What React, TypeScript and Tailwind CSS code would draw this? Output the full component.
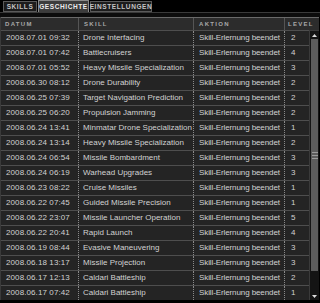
const rows: [string, string, number][] = [
  ["2008.07.01 09:32", "Drone Interfacing", 2],
  ["2008.07.01 07:42", "Battlecruisers", 4],
  ["2008.07.01 05:52", "Heavy Missile Specialization", 3],
  ["2008.06.30 08:12", "Drone Durability", 2],
  ["2008.06.25 07:39", "Target Navigation Prediction", 2],
  ["2008.06.25 06:20", "Propulsion Jamming", 2],
  ["2008.06.24 13:41", "Minmatar Drone Specialization", 1],
  ["2008.06.24 13:14", "Heavy Missile Specialization", 2],
  ["2008.06.24 06:54", "Missile Bombardment", 3],
  ["2008.06.24 06:19", "Warhead Upgrades", 3],
  ["2008.06.23 08:22", "Cruise Missiles", 1],
  ["2008.06.22 07:45", "Guided Missile Precision", 1],
  ["2008.06.22 23:07", "Missile Launcher Operation", 5],
  ["2008.06.22 20:41", "Rapid Launch", 4],
  ["2008.06.19 08:44", "Evasive Maneuvering", 3],
  ["2008.06.18 13:17", "Missile Projection", 3],
  ["2008.06.17 12:13", "Caldari Battleship", 2],
  ["2008.06.17 07:42", "Caldari Battleship", 1],
];

const cols = "grid grid-cols-[77px_115px_91px_25px]";

const App = () => {
  return (
    <div className="w-[320px] h-[303px] bg-black overflow-hidden font-['Liberation_Sans',sans-serif] text-[#d2d2d2]">
      {/* tabs */}
      <div className="flex items-end h-[12px] pl-[3px] gap-[1px] text-[6.5px] font-bold tracking-[0.6px] uppercase">
        <div className="h-[11px] w-[34px] shrink-0 flex items-center justify-center border border-[#5a5a5a] bg-[#1c1c1c] text-[#c4c4c4]">
          Skills
        </div>
        <div className="h-[12px] w-[51px] shrink-0 flex items-center justify-center border border-b-0 border-[#8a8a8a] bg-[#3c3c3c] text-[#ececec]">
          Geschichte
        </div>
        <div className="h-[11px] w-[62px] shrink-0 flex items-center justify-center border border-[#5a5a5a] bg-[#1c1c1c] text-[#c4c4c4]">
          Einstellungen
        </div>
      </div>
      <div className="h-[5px] bg-[#0c0c0c] border-t border-[#3a3a3a]" />

      <div className="border-l border-[#3a3a3a] w-[319px]">
        {/* header */}
        <div className="flex h-[13px] bg-[#2c2c2c] border-t border-[#6a6a6a] text-[6px] font-bold tracking-[1.3px] text-[#a8a8a8]">
          <div className={cols}>
            <div className="pl-[4px] flex items-center">DATUM</div>
            <div className="pl-[5px] flex items-center border-l border-[#555]">SKILL</div>
            <div className="pl-[5px] flex items-center border-l border-[#555]">AKTION</div>
            <div className="pl-[3px] flex items-center border-l border-[#555]">LEVEL</div>
          </div>
        </div>
        <div className="flex">
          <div className="w-[308px]">
            {rows.map(([d, s, l], i) => (
              <div
                key={i}
                className={`${cols} h-[15px] bg-[#242424] border-t border-[#4e4e4e] text-[8px] leading-none`}
              >
                <div className="pl-[5px] flex items-center tracking-[0.1px] whitespace-nowrap">{d}</div>
                <div className="pl-[4px] flex items-center border-l border-dotted border-[#8a8a8a] whitespace-nowrap overflow-hidden">{s}</div>
                <div className="pl-[5px] flex items-center border-l border-dotted border-[#8a8a8a] tracking-[-0.1px] whitespace-nowrap">Skill-Erlernung beendet</div>
                <div className="pl-[6px] flex items-center border-l border-dotted border-[#8a8a8a]">{l}</div>
              </div>
            ))}
          </div>
          {/* scrollbar */}
          <div className="w-[11px] bg-[#141414] border-l border-t border-[#3a3a3a] flex flex-col">
            <div className="h-[8px] flex items-center justify-center text-[#dcdcdc]">
              <svg width="5" height="3" viewBox="0 0 5 3"><path d="M2.5 0 L5 3 L0 3 Z" fill="currentColor" /></svg>
            </div>
            <div className="h-[232px] mx-[1px] bg-[#5c5c5c] flex items-center justify-center">
              <div className="flex flex-col gap-[2px]">
                <div className="w-[6px] h-[1px] bg-[#9a9a9a]" />
                <div className="w-[6px] h-[1px] bg-[#9a9a9a]" />
                <div className="w-[6px] h-[1px] bg-[#9a9a9a]" />
              </div>
            </div>
            <div className="flex-1" />
            <div className="h-[8px] flex items-center justify-center text-[#dcdcdc]">
              <svg width="5" height="3" viewBox="0 0 5 3"><path d="M0 0 L5 0 L2.5 3 Z" fill="currentColor" /></svg>
            </div>
          </div>
        </div>
      </div>
    </div>
  );
};

export default App;
